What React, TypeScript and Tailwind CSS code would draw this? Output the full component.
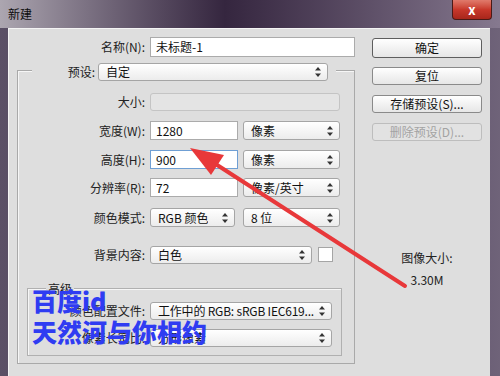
import type { ReactNode } from 'react'

const font = "font-['Noto_Sans_CJK_SC','Liberation_Sans',sans-serif]"

function Arrows() {
  return (
    <svg width="6" height="10" viewBox="0 0 6 10" className="shrink-0">
      <path d="M3 0 L6 3.5 L0 3.5 Z" fill="#333" />
      <path d="M3 10 L6 6.5 L0 6.5 Z" fill="#333" />
    </svg>
  )
}

function Select({ text, className = '', disabled = false }: { text?: string; className?: string; disabled?: boolean }) {
  return (
    <div
      className={`flex items-center justify-between rounded-[3px] border pl-[7px] pr-[6px] ${
        disabled ? 'border-[#c4c4c4] bg-[#e4e4e4]' : 'border-[#a5a5a5] bg-gradient-to-b from-white to-[#ececec]'
      } ${className}`}
    >
      <span className="overflow-hidden whitespace-nowrap text-[12px] text-[#111]">{text}</span>
      {!disabled && <Arrows />}
    </div>
  )
}

function Input({ value, className = '', focus = false }: { value: string; className?: string; focus?: boolean }) {
  return (
    <div
      className={`flex items-center bg-white pl-[5px] text-[12px] text-[#111] border ${
        focus ? 'border-[#6f9fd4]' : 'border-[#ababab]'
      } ${className}`}
    >
      {value}
    </div>
  )
}

function Row({ label, labelW, children, className = '' }: { label: string; labelW: string; children: ReactNode; className?: string }) {
  return (
    <div className={`flex items-stretch ${className}`}>
      <div className={`flex items-center justify-end pr-[5px] text-[12px] text-[#222] ${labelW}`}>{label}</div>
      {children}
    </div>
  )
}

function Button({ label, className = '', disabled = false, def = false }: { label: string; className?: string; disabled?: boolean; def?: boolean }) {
  return (
    <div
      className={`flex w-[110px] items-center justify-center rounded-[3px] border text-[12px] ${
        disabled
          ? 'border-[#bdbdbd] bg-[#e2e2e2] text-[#a3a3a3]'
          : `${def ? 'border-[#5e5e5e]' : 'border-[#8a8a8a]'} bg-gradient-to-b from-white to-[#e6e6e6] text-[#111]`
      } ${className}`}
    >
      {label}
    </div>
  )
}

export default function App() {
  return (
    <div className={`relative h-[376px] w-[500px] overflow-hidden bg-gradient-to-r from-[#5b5066] via-[#3a2c48] to-[#6f6379] ${font}`}>
      {/* title bar */}
      <div className="flex h-[28px] items-start bg-gradient-to-r from-[#aca6b0] via-[#35263f] via-45% to-[#86798f]">
        <span className="ml-[8px] mt-[5px] text-[12px] text-[#0d0d0d]">新建</span>
        <div className="ml-auto mr-[8px] flex h-[20px] w-[40px] items-center justify-center rounded-b-[4px] border border-t-0 border-[#4a1a16] bg-gradient-to-b from-[#e07a6c] via-[#c8382b] to-[#a8261b]">
          <span className="text-[13px] font-bold leading-none text-white">x</span>
        </div>
      </div>

      {/* body */}
      <div className="ml-[8px] flex h-[348px] w-[482px] border-l border-t border-[#f4f4f4] bg-[#dedede]">
        {/* left */}
        <div className="flex w-[346px] flex-col">
          <Row label="名称(N):" labelW="w-[141px]" className="mt-[8px] h-[20px]">
            <Input value="未标题-1" className="w-[205px]" />
          </Row>

          <div className="ml-[8px] mt-[13px] flex w-[338px] flex-col border border-[#a9a9a9] shadow-[inset_1px_1px_0_#f6f6f6]">
            <div className="-mt-[8px] ml-[14px] flex h-[18px] w-[304px] bg-[#dedede]">
              <div className="flex w-[66px] items-center justify-end pr-[3px] text-[12px] text-[#222]">预设:</div>
              <Select text="自定" className="w-[230px]" />
            </div>

            <Row label="大小:" labelW="w-[132px] text-[#9a9a9a]" className="mt-[12px] h-[18px]">
              <Select disabled className="w-[190px]" />
            </Row>
            <Row label="宽度(W):" labelW="w-[132px]" className="mt-[10px] h-[19px]">
              <Input value="1280" className="w-[88px]" />
              <Select text="像素" className="ml-[5px] w-[97px]" />
            </Row>
            <Row label="高度(H):" labelW="w-[132px]" className="mt-[10px] h-[19px]">
              <Input value="900" focus className="w-[88px]" />
              <Select text="像素" className="ml-[5px] w-[97px]" />
            </Row>
            <Row label="分辨率(R):" labelW="w-[132px]" className="mt-[9px] h-[19px]">
              <Input value="72" className="w-[88px]" />
              <Select text="像素/英寸" className="ml-[5px] w-[97px]" />
            </Row>
            <Row label="颜色模式:" labelW="w-[132px]" className="mt-[11px] h-[19px]">
              <Select text="RGB 颜色" className="w-[85px]" />
              <Select text="8 位" className="ml-[8px] w-[97px]" />
            </Row>
            <Row label="背景内容:" labelW="w-[132px]" className="mt-[19px] h-[18px]">
              <Select text="白色" className="w-[162px]" />
              <div className="ml-[6px] mt-[1px] h-[15px] w-[15px] border border-[#a5a5a5] bg-white" />
            </Row>

            {/* advanced */}
            <div className="mb-[7px] ml-[9px] mt-[24px] flex w-[315px] flex-col border border-[#b0b0b0] pb-[8px] shadow-[inset_1px_1px_0_#f6f6f6]">
              <div className="-mt-[7px] ml-[18px] h-[14px] w-fit bg-[#dedede] px-[2px] text-[12px] leading-[14px] text-[#222]">高级</div>
              <Row label="颜色配置文件:" labelW="w-[122px]" className="mt-[6px] h-[18px]">
                <Select text="工作中的 RGB: sRGB IEC619..." className="w-[182px] tracking-[-0.2px]" />
              </Row>
              <Row label="像素长宽比:" labelW="w-[122px]" className="mt-[9px] h-[18px]">
                <Select text="方形像素" className="w-[182px]" />
              </Row>
            </div>
          </div>
        </div>

        {/* right */}
        <div className="ml-[17px] flex flex-col">
          <Button label="确定" def className="mt-[9px] h-[20px]" />
          <Button label="复位" className="mt-[9px] h-[18px]" />
          <Button label="存储预设(S)..." className="mt-[10px] h-[18px]" />
          <Button label="删除预设(D)..." disabled className="mt-[10px] h-[18px]" />
          <div className="mt-[109px] flex flex-col items-center text-[12px] text-[#222]">
            <span className="leading-[16px]">图像大小:</span>
            <span className="mt-[6px] leading-[16px]">3.30M</span>
          </div>
        </div>
      </div>

      {/* red arrow annotation */}
      <svg className="pointer-events-none absolute left-0 top-0" width="500" height="376">
        <line x1="405" y1="286" x2="214" y2="163" stroke="#e8383a" strokeWidth="4" strokeLinecap="round" />
        <path d="M190 148 L211 175 L224 155 Z" fill="#e8383a" />
      </svg>

      {/* watermark */}
      <div className="pointer-events-none absolute left-[32px] top-[285px] flex flex-col text-[25px] font-black leading-[31px] text-[#2f3cf2]">
        <span>百度id</span>
        <span>天然河与你相约</span>
      </div>
    </div>
  )
}
